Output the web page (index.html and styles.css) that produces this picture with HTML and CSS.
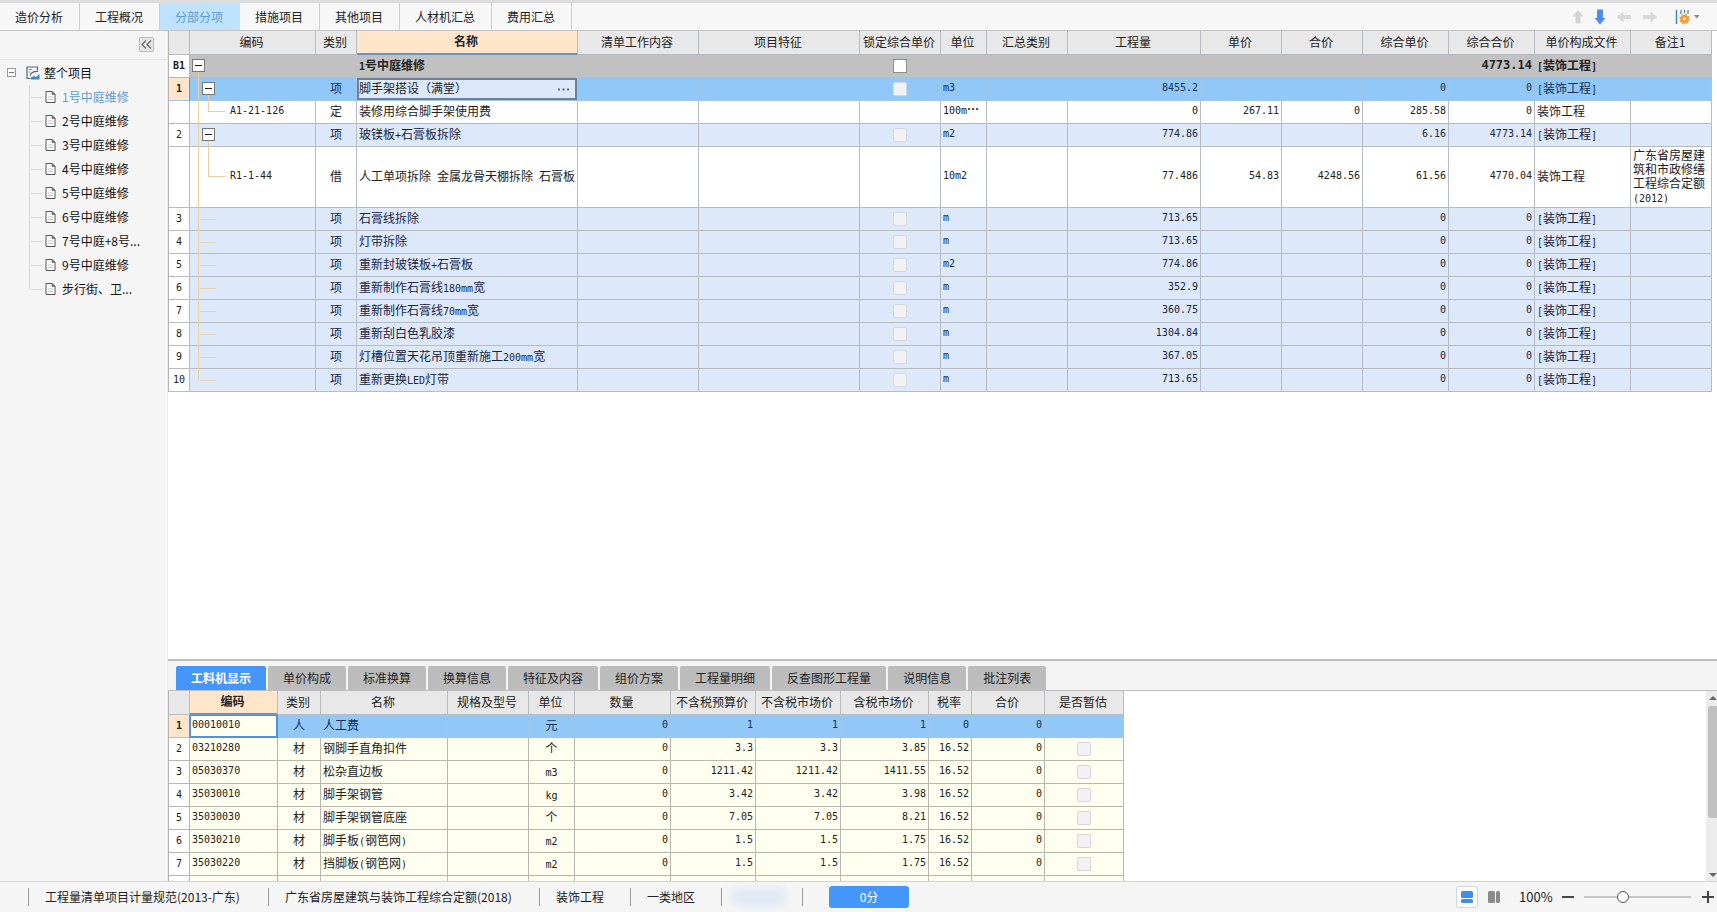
FILE: index.html
```html
<!DOCTYPE html>
<html lang="zh-CN">
<head>
<meta charset="utf-8">
<title>分部分项</title>
<link rel="stylesheet" href="styles.css">
</head>
<body>
<header class="topbar">
  <nav class="tabs">
    <button class="tab">造价分析</button>
    <button class="tab">工程概况</button>
    <button class="tab tab-active">分部分项</button>
    <button class="tab">措施项目</button>
    <button class="tab">其他项目</button>
    <button class="tab">人材机汇总</button>
    <button class="tab">费用汇总</button>
  </nav>
  <div class="tools">
    <button class="tool" aria-label="上移"><svg width="12" height="16" viewBox="0 0 12 16"><path d="M6 1 11.500 7.500H8.500V14.500H3.500V7.500H.5Z" fill="#d3d3d3"/></svg></button>
    <button class="tool" aria-label="下移"><svg width="12" height="16" viewBox="0 0 12 16"><path d="M6 15.500 11.500 9H9V.5H3V9H.5Z" fill="#4a90e8"/></svg></button>
    <button class="tool" aria-label="左移"><svg width="16" height="12" viewBox="0 0 16 12"><path d="M.5 6 7.500 .5V4H15V8H7.500V11.500Z" fill="#d9d9d9"/></svg></button>
    <button class="tool" aria-label="右移"><svg width="16" height="12" viewBox="0 0 16 12"><path d="M15.500 6 8.500 .5V4H1V8H8.500V11.500Z" fill="#d9d9d9"/></svg></button>
    <button class="tool tool-set" aria-label="列设置"><svg width="26" height="16" viewBox="0 0 26 16"><path d="M1.500 1V15" stroke="#3f8fb5" stroke-width="1.500"/><path d="M6 1V5M9.500 1V4M13 1V5" stroke="#4f86b8" stroke-width="1.300"/><circle cx="9.500" cy="10" r="2.800" fill="none" stroke="#f0a030" stroke-width="3"/><circle cx="9.500" cy="10" r="4.500" fill="none" stroke="#f0a030" stroke-width="1.400" stroke-dasharray="2 1.500"/><path d="M19 6H24.500L21.750 9.500Z" fill="#888"/></svg></button>
  </div>
</header>
<div class="body">
  <aside class="side">
    <div class="side-head"><button class="fold" aria-label="收起"><svg width="11" height="9" viewBox="0 0 11 9"><path d="M5 .5 1 4.500 5 8.500M10 .5 6 4.500 10 8.500" fill="none" stroke="#666" stroke-width="1.200"/></svg></button></div>
    <div class="root"><button class="exp" aria-label="折叠"></button><svg width="14" height="14" viewBox="0 0 14 14"><path d="M11.500 4.500V1H1V12.500H4.500" fill="none" stroke="#55677c" stroke-width="1.200"/><path d="M3 3.500H6M3 6H4.500" stroke="#8593a5"/><path d="M4 9.500Q6 5 12 5.500" fill="none" stroke="#55677c" stroke-width="1.200"/><path d="M5 13.500V11.500L8 10 10 11 13.500 8V13.500Z" fill="#3f86d0"/></svg><span>整个项目</span></div>
    <ul class="tree">
      <li><a class="on" href="#1"><svg class="doc" viewBox="0 0 11 13"><use href="#doc"/></svg>1号中庭维修</a></li>
      <li><a href="#2"><svg class="doc" viewBox="0 0 11 13"><use href="#doc"/></svg>2号中庭维修</a></li>
      <li><a href="#3"><svg class="doc" viewBox="0 0 11 13"><use href="#doc"/></svg>3号中庭维修</a></li>
      <li><a href="#4"><svg class="doc" viewBox="0 0 11 13"><use href="#doc"/></svg>4号中庭维修</a></li>
      <li><a href="#5"><svg class="doc" viewBox="0 0 11 13"><use href="#doc"/></svg>5号中庭维修</a></li>
      <li><a href="#6"><svg class="doc" viewBox="0 0 11 13"><use href="#doc"/></svg>6号中庭维修</a></li>
      <li><a href="#7"><svg class="doc" viewBox="0 0 11 13"><use href="#doc"/></svg>7号中庭+8号<i>...</i></a></li>
      <li><a href="#9"><svg class="doc" viewBox="0 0 11 13"><use href="#doc"/></svg>9号中庭维修</a></li>
      <li><a href="#10"><svg class="doc" viewBox="0 0 11 13"><use href="#doc"/></svg>步行街、卫<i>...</i></a></li>
    </ul>
    <svg class="defs" width="0" height="0"><defs><g id="doc"><path d="M1 .5H7L10 3.500V11.500H1Z" fill="#fff" stroke="#555"/><path d="M7 .5V3.500H10Z" fill="#777" stroke="#555" stroke-width=".6"/><path d="M3 6H8M3 8.500H8" stroke="#c4c4c4"/></g></defs></svg>
  </aside>
  <main class="main">
    <section class="upper">
      <table class="grid bill">
        <colgroup><col class="w21"><col class="w126"><col class="w41"><col class="w221"><col class="w121"><col class="w161"><col class="w81"><col class="w46"><col class="w81"><col class="w133"><col class="w81"><col class="w81"><col class="w86"><col class="w86"><col class="w96"><col class="w81"></colgroup>
        <thead><tr><th></th><th>编码</th><th>类别</th><th class="hot">名称</th><th>清单工作内容</th><th>项目特征</th><th>锁定综合单价</th><th>单位</th><th>汇总类别</th><th>工程量</th><th>单价</th><th>合价</th><th>综合单价</th><th>综合合价</th><th>单价构成文件</th><th>备注1</th></tr></thead>
        <tbody>
          <tr class="group"><td class="no">B1</td><td class="code start"><button class="minus m0" aria-label="折叠"></button></td><td></td><td><b>1</b>号中庭维修</td><td></td><td></td><td class="c"><input type="checkbox" aria-label="锁定"></td><td></td><td></td><td></td><td></td><td></td><td></td><td class="n">4773.14</td><td><b>[</b>装饰工程<b>]</b></td><td></td></tr>
          <tr class="sel"><td class="no">1</td><td class="code open"><button class="minus m1" aria-label="折叠"></button></td><td class="c">项</td><td class="edit"><div class="editor"><input type="text" aria-label="名称" value="脚手架搭设（满堂）"><button aria-label="更多"><svg width="11" height="3" viewBox="0 0 11 3"><path d="M0 .5H2V2.500H0ZM4.500 .5H6.500V2.500H4.500ZM9 .5H11V2.500H9Z" fill="#667"/></svg></button></div></td><td></td><td></td><td class="c"><input type="checkbox" disabled aria-label="锁定"></td><td class="u">m3</td><td></td><td class="n">8455.2</td><td></td><td></td><td class="n">0</td><td class="n">0</td><td><b>[</b>装饰工程<b>]</b></td><td></td></tr>
          <tr><td class="no"></td><td class="code kid">A1-21-126</td><td class="c">定</td><td>装修用综合脚手架使用费</td><td></td><td></td><td></td><td class="u">100m<i>…</i></td><td></td><td class="n">0</td><td class="n">267.11</td><td class="n">0</td><td class="n">285.58</td><td class="n">0</td><td>装饰工程</td><td></td></tr>
          <tr class="item"><td class="no">2</td><td class="code open"><button class="minus m1" aria-label="折叠"></button></td><td class="c">项</td><td>玻镁板<b>+</b>石膏板拆除</td><td></td><td></td><td class="c"><input type="checkbox" disabled aria-label="锁定"></td><td class="u">m2</td><td></td><td class="n">774.86</td><td></td><td></td><td class="n">6.16</td><td class="n">4773.14</td><td><b>[</b>装饰工程<b>]</b></td><td></td></tr>
          <tr class="tall"><td class="no"></td><td class="code kid">R1-1-44</td><td class="c">借</td><td>人工单项拆除<b> </b>金属龙骨天棚拆除<b> </b>石膏板</td><td></td><td></td><td></td><td class="u">10m2</td><td></td><td class="n">77.486</td><td class="n">54.83</td><td class="n">4248.56</td><td class="n">61.56</td><td class="n">4770.04</td><td>装饰工程</td><td class="note">广东省房屋建筑和市政修缮工程综合定额<b>(2012)</b></td></tr>
          <tr class="item"><td class="no">3</td><td class="code leaf"></td><td class="c">项</td><td>石膏线拆除</td><td></td><td></td><td class="c"><input type="checkbox" disabled aria-label="锁定"></td><td class="u">m</td><td></td><td class="n">713.65</td><td></td><td></td><td class="n">0</td><td class="n">0</td><td><b>[</b>装饰工程<b>]</b></td><td></td></tr>
          <tr class="item"><td class="no">4</td><td class="code leaf"></td><td class="c">项</td><td>灯带拆除</td><td></td><td></td><td class="c"><input type="checkbox" disabled aria-label="锁定"></td><td class="u">m</td><td></td><td class="n">713.65</td><td></td><td></td><td class="n">0</td><td class="n">0</td><td><b>[</b>装饰工程<b>]</b></td><td></td></tr>
          <tr class="item"><td class="no">5</td><td class="code leaf"></td><td class="c">项</td><td>重新封玻镁板<b>+</b>石膏板</td><td></td><td></td><td class="c"><input type="checkbox" disabled aria-label="锁定"></td><td class="u">m2</td><td></td><td class="n">774.86</td><td></td><td></td><td class="n">0</td><td class="n">0</td><td><b>[</b>装饰工程<b>]</b></td><td></td></tr>
          <tr class="item"><td class="no">6</td><td class="code leaf"></td><td class="c">项</td><td>重新制作石膏线<b>180mm</b>宽</td><td></td><td></td><td class="c"><input type="checkbox" disabled aria-label="锁定"></td><td class="u">m</td><td></td><td class="n">352.9</td><td></td><td></td><td class="n">0</td><td class="n">0</td><td><b>[</b>装饰工程<b>]</b></td><td></td></tr>
          <tr class="item"><td class="no">7</td><td class="code leaf"></td><td class="c">项</td><td>重新制作石膏线<b>70mm</b>宽</td><td></td><td></td><td class="c"><input type="checkbox" disabled aria-label="锁定"></td><td class="u">m</td><td></td><td class="n">360.75</td><td></td><td></td><td class="n">0</td><td class="n">0</td><td><b>[</b>装饰工程<b>]</b></td><td></td></tr>
          <tr class="item"><td class="no">8</td><td class="code leaf"></td><td class="c">项</td><td>重新刮白色乳胶漆</td><td></td><td></td><td class="c"><input type="checkbox" disabled aria-label="锁定"></td><td class="u">m</td><td></td><td class="n">1304.84</td><td></td><td></td><td class="n">0</td><td class="n">0</td><td><b>[</b>装饰工程<b>]</b></td><td></td></tr>
          <tr class="item"><td class="no">9</td><td class="code leaf"></td><td class="c">项</td><td>灯槽位置天花吊顶重新施工<b>200mm</b>宽</td><td></td><td></td><td class="c"><input type="checkbox" disabled aria-label="锁定"></td><td class="u">m</td><td></td><td class="n">367.05</td><td></td><td></td><td class="n">0</td><td class="n">0</td><td><b>[</b>装饰工程<b>]</b></td><td></td></tr>
          <tr class="item"><td class="no">10</td><td class="code leaf end"></td><td class="c">项</td><td>重新更换<b>LED</b>灯带</td><td></td><td></td><td class="c"><input type="checkbox" disabled aria-label="锁定"></td><td class="u">m</td><td></td><td class="n">713.65</td><td></td><td></td><td class="n">0</td><td class="n">0</td><td><b>[</b>装饰工程<b>]</b></td><td></td></tr>
        </tbody>
      </table>
    </section>
    <section class="lower">
      <nav class="subtabs">
        <button class="sub sub-active">工料机显示</button>
        <button class="sub">单价构成</button>
        <button class="sub">标准换算</button>
        <button class="sub">换算信息</button>
        <button class="sub">特征及内容</button>
        <button class="sub">组价方案</button>
        <button class="sub">工程量明细</button>
        <button class="sub">反查图形工程量</button>
        <button class="sub">说明信息</button>
        <button class="sub">批注列表</button>
      </nav>
      <div class="pane">
        <div class="pane-view">
        <table class="grid res">
          <colgroup><col class="w21"><col class="w88"><col class="w43"><col class="w127"><col class="w81"><col class="w46"><col class="w96"><col class="w85"><col class="w85"><col class="w88"><col class="w43"><col class="w73"><col class="w79"></colgroup>
          <thead><tr><th></th><th class="hot">编码</th><th>类别</th><th>名称</th><th>规格及型号</th><th>单位</th><th>数量</th><th>不含税预算价</th><th>不含税市场价</th><th>含税市场价</th><th>税率</th><th>合价</th><th>是否暂估</th></tr></thead>
          <tbody>
            <tr class="sel"><td class="no">1</td><td class="u focus">00010010</td><td class="c">人</td><td>人工费</td><td></td><td class="c">元</td><td class="n">0</td><td class="n">1</td><td class="n">1</td><td class="n">1</td><td class="n">0</td><td class="n">0</td><td></td></tr>
            <tr><td class="no">2</td><td class="u">03210280</td><td class="c">材</td><td>钢脚手直角扣件</td><td></td><td class="c">个</td><td class="n">0</td><td class="n">3.3</td><td class="n">3.3</td><td class="n">3.85</td><td class="n">16.52</td><td class="n">0</td><td class="c"><input type="checkbox" disabled aria-label="暂估"></td></tr>
            <tr><td class="no">3</td><td class="u">05030370</td><td class="c">材</td><td>松杂直边板</td><td></td><td class="c"><b>m3</b></td><td class="n">0</td><td class="n">1211.42</td><td class="n">1211.42</td><td class="n">1411.55</td><td class="n">16.52</td><td class="n">0</td><td class="c"><input type="checkbox" disabled aria-label="暂估"></td></tr>
            <tr><td class="no">4</td><td class="u">35030010</td><td class="c">材</td><td>脚手架钢管</td><td></td><td class="c"><b>kg</b></td><td class="n">0</td><td class="n">3.42</td><td class="n">3.42</td><td class="n">3.98</td><td class="n">16.52</td><td class="n">0</td><td class="c"><input type="checkbox" disabled aria-label="暂估"></td></tr>
            <tr><td class="no">5</td><td class="u">35030030</td><td class="c">材</td><td>脚手架钢管底座</td><td></td><td class="c">个</td><td class="n">0</td><td class="n">7.05</td><td class="n">7.05</td><td class="n">8.21</td><td class="n">16.52</td><td class="n">0</td><td class="c"><input type="checkbox" disabled aria-label="暂估"></td></tr>
            <tr><td class="no">6</td><td class="u">35030210</td><td class="c">材</td><td>脚手板<b>(</b>钢笆网<b>)</b></td><td></td><td class="c"><b>m2</b></td><td class="n">0</td><td class="n">1.5</td><td class="n">1.5</td><td class="n">1.75</td><td class="n">16.52</td><td class="n">0</td><td class="c"><input type="checkbox" disabled aria-label="暂估"></td></tr>
            <tr><td class="no">7</td><td class="u">35030220</td><td class="c">材</td><td>挡脚板<b>(</b>钢笆网<b>)</b></td><td></td><td class="c"><b>m2</b></td><td class="n">0</td><td class="n">1.5</td><td class="n">1.5</td><td class="n">1.75</td><td class="n">16.52</td><td class="n">0</td><td class="c"><input type="checkbox" disabled aria-label="暂估"></td></tr>
            <tr><td class="no"></td><td></td><td></td><td></td><td></td><td></td><td></td><td></td><td></td><td></td><td></td><td></td><td></td></tr>
          </tbody>
        </table>
        </div>
        <div class="scroll"><span class="up"></span><span class="thumb"></span><span class="down"></span></div>
      </div>
    </section>
  </main>
</div>
<footer class="status">
  <span class="cell spec">工程量清单项目计量规范(2013-广东)</span>
  <span class="cell quota">广东省房屋建筑与装饰工程综合定额(2018)</span>
  <span class="cell kind">装饰工程</span>
  <span class="cell zone">一类地区</span>
  <span class="cell veil"><span class="smudge"></span></span>
  <span class="cell last"><button class="score">0分</button></span>
  <div class="zoom">
    <button class="view view-on" aria-label="上下布局"><svg width="12" height="12" viewBox="0 0 12 12"><rect width="12" height="7" rx="1.500" fill="#3f8fe8"/><rect y="8" width="12" height="4" rx="1.500" fill="#3f8fe8"/></svg></button>
    <button class="view" aria-label="左右布局"><svg width="12" height="12" viewBox="0 0 12 12"><rect width="7" height="12" rx="1.500" fill="#8a8a8a"/><rect x="8" width="4" height="12" rx="1.500" fill="#8a8a8a"/></svg></button>
    <label class="pct" for="zoom">100%</label>
    <button class="step" aria-label="缩小"><svg width="12" height="12" viewBox="0 0 12 12"><path d="M0 6H12" stroke="#444" stroke-width="2"/></svg></button>
    <input class="range" id="zoom" type="range" min="0" max="100" value="35">
    <button class="step" aria-label="放大"><svg width="12" height="12" viewBox="0 0 12 12"><path d="M0 6H12M6 0V12" stroke="#444" stroke-width="2"/></svg></button>
  </div>
</footer>
</body>
</html>
```
FILE: styles.css
```css
* { box-sizing: border-box; }
html, body { height: 100%; }
body {
  margin: 0;
  display: flex;
  flex-direction: column;
  overflow: hidden;
  background: #fff;
  color: #222;
  font: 12px/16px "Noto Sans CJK SC", sans-serif;
}
button, input { margin: 0; padding: 0; border: 0; background: none; font: inherit; color: inherit; }
svg { display: block; }

/* top bar */
.topbar {
  display: flex;
  justify-content: space-between;
  height: 31px;
  flex: none;
  border-top: 3px solid #dcdcdc;
  border-bottom: 1px solid #c4c4c4;
  background: #f7f7f7;
}
.tabs { display: flex; }
.tab { padding: 0 16px 0 15px; border-right: 1px solid #cfcfcf; }
.tab-active { background: #bfe2ff; color: #5b9bd5; border-right-color: #bfe2ff; }
.tools { display: flex; align-items: center; gap: 10px; padding-right: 16px; }
.tool-set { margin-left: 7px; }

.body { flex: 1; display: flex; min-height: 0; }

/* project tree */
.side { width: 168px; flex: none; background: #f5f5f5; border-right: 1px solid #ececec; }
.side-head { display: flex; justify-content: flex-end; align-items: center; height: 29px; padding: 0 13px 1px 0; border-bottom: 1px solid #e2e2e2; }
.fold { display: grid; place-items: center; width: 15px; height: 15px; border: 1px solid #bbb; border-radius: 2px; background: #e6e6e6; }
.root { display: flex; align-items: center; height: 25px; padding-left: 7px; color: #111; }
.root span { padding-left: 4px; }
.exp { width: 9px; height: 9px; margin-right: 10px; border: 1px solid #999; background: linear-gradient(#777, #777) center / 5px 1px no-repeat #fff; }
.tree { list-style: none; margin: 0 0 0 29px; padding: 0; }
.tree li { height: 24px; background: linear-gradient(#ecd9b0, #ecd9b0) 2px 12px / 11px 1px no-repeat, linear-gradient(#ecd9a0, #ecd9a0) 0 0 / 1px 100% no-repeat; }
.tree li:last-child { background-size: 11px 1px, 1px 12px; }
.tree a { display: flex; align-items: center; height: 24px; padding-left: 16px; color: #111; text-decoration: none; white-space: nowrap; }
.tree .on { color: #5b9bd5; }
.tree i { font-style: normal; }
.doc { width: 11px; height: 13px; margin-right: 6px; }
.defs { display: none; }

.main { flex: 1; min-width: 0; display: flex; flex-direction: column; }
.upper { flex: 1; min-height: 0; overflow: hidden; padding-right: 5px; }

/* grids */
.grid { table-layout: fixed; border-collapse: separate; border-spacing: 0; border-left: 1px solid #b4b4b4; }
.bill { width: 100%; }
.res { width: 956px; }
.w21 { width: 21px; } .w41 { width: 41px; } .w43 { width: 43px; } .w46 { width: 46px; }
.w73 { width: 73px; } .w79 { width: 79px; } .w81 { width: 81px; } .w85 { width: 85px; }
.w86 { width: 86px; } .w88 { width: 88px; } .w96 { width: 96px; } .w121 { width: 121px; }
.w126 { width: 126px; } .w127 { width: 127px; } .w133 { width: 133px; } .w161 { width: 161px; } .w221 { width: 221px; }
.grid th, .grid td { padding: 0 2px 2px; border: solid #b6bcc2; border-width: 0 1px 1px 0; white-space: nowrap; overflow: hidden; }
.grid th { height: 24px; padding: 0 2px 2px 0; background: #e8e8e8; font-weight: 400; }
.grid .hot { background: #ffe6cb; border-bottom: 2px solid #6495cc; font-weight: 700; }
.grid td { height: 23px; }
.grid b { font: 10px/12px "DejaVu Sans Mono", monospace; font-weight: inherit; white-space: pre; }
.grid .no { padding: 0; background: #fff; text-align: center; font-family: "DejaVu Sans Mono", monospace; font-size: 10px; color: #222; }
.grid .c { text-align: center; padding: 0 0 2px; }
.grid .c:has(input) { padding: 0; }
.grid .n, .grid .u, .grid .code { font-family: "DejaVu Sans Mono", monospace; font-size: 10px; }
.grid .n { text-align: right; }
.u i { font: 12px/12px "Noto Sans CJK SC", sans-serif; font-weight: 700; }
.grid input[type=checkbox] { appearance: none; display: block; width: 14px; height: 14px; margin: 0 auto; border: 1px solid #8c8c8c; background: #fff; }
.grid input[type=checkbox]:disabled { border-color: #d6d6de; border-radius: 2px; background: #f2f2f4; }
.group td { background: #c1c1c1; border-color: #c1c1c1; border-bottom-color: #c8b8b0; font-weight: 700; }
.grid .group .no { font-weight: 700; border-color: #b6b6b6; }
.grid .group .n { font-size: 12px; }
.item td { background: #dde9fb; color: #1a2440; }
.grid .sel td { background: #91c8f7; border-color: #9fc6e8; color: #10305c; }
.grid .sel .no { background: #ffe6cb; border-right-color: #6495cc; color: #222; font-weight: 700; }
.tall td { height: 61px; }
.grid .note { white-space: normal; line-height: 14px; word-break: break-all; }
.res tbody td { background: #ffffef; border-color: #b8b8ae; }
.res tbody .no { background: #fff; }
.grid .sel .focus { background: #ffffef; color: #222; box-shadow: inset 0 0 0 1px #5090e0; border-color: #5090e0; }

.grid .edit { padding: 0; }
.editor { display: flex; height: 22px; border: 2px solid #6f7f95; background: #dde9fb; }
.editor input { flex: 1; min-width: 0; padding-bottom: 2px; color: #222; }
.editor button { display: grid; place-items: center; width: 24px; }

/* outline connectors in the code column */
.grid .code { position: relative; padding-left: 40px; overflow: visible; }
.code::before { content: ""; position: absolute; left: 8px; top: 0; bottom: -1px; width: 1px; background: #e8cf9c; }
.start::before { top: 17px; }
.end::before { bottom: 11px; }
.leaf::after { content: ""; position: absolute; left: 10px; top: 11px; width: 16px; height: 1px; background: #e4d2b0; }
.open::after { content: ""; position: absolute; left: 18px; top: 17px; bottom: -1px; width: 1px; background: #e8cf9c; }
.kid::after { content: ""; position: absolute; left: 18px; top: 0; bottom: 50%; width: 16px; border: solid #e8cf9c; border-width: 0 0 1px 1px; }
.minus { position: absolute; top: 4px; width: 13px; height: 13px; z-index: 1; border: 1px solid #777; background: linear-gradient(#222, #222) center / 7px 1px no-repeat #fff; }
.m0 { left: 2px; }
.m1 { left: 12px; }

/* lower pane */
.lower { flex: none; height: 222px; display: flex; flex-direction: column; border-top: 2px solid #bdbdbd; background: #f4f4f4; }
.subtabs { display: flex; flex: none; gap: 2px; height: 30px; padding: 5px 8px 0; border-bottom: 1px solid #bdbdbd; }
.sub { padding: 0 15px; border-radius: 2px 2px 0 0; background: #bcbcbc; }
.sub-active { background: #4496f8; color: #fff; font-weight: 700; }
.pane { flex: 1; min-height: 0; display: flex; background: #fff; }
.pane-view { flex: 1; min-width: 0; overflow: hidden; }
.scroll { display: flex; flex-direction: column; align-items: center; width: 11px; flex: none; padding: 5px 0 4px 2px; background: #ececec; }
.up, .down { border: 4px solid transparent; }
.up { border-top: 0; border-bottom-color: #666; }
.down { border-bottom: 0; border-top-color: #666; margin-top: auto; }
.thumb { width: 9px; height: 112px; margin-top: 6px; border-radius: 3px 0 0 3px; background: #c0c0c0; }

/* status bar */
.status { flex: none; display: flex; align-items: center; height: 31px; padding-left: 28px; border-top: 1px solid #d4d4d4; background: #f5f5f5; white-space: nowrap; }
.cell { height: 18px; padding: 0 27px 0 16px; border-left: 1px solid #999; line-height: 18px; }
.spec { width: 240px; }
.quota { width: 271px; }
.kind, .zone { width: 91px; }
.veil { width: 81px; padding: 0 16px 0 10px; }
.smudge { display: block; height: 18px; background: #dfe9f4; filter: blur(4px); }
.last { display: flex; align-items: center; padding: 0 0 0 26px; }
.score { width: 80px; height: 22px; border-radius: 3px; background: #4496f8; color: #fff; }
.zoom { display: flex; align-items: center; margin-left: auto; padding-right: 3px; }
.view { display: grid; place-items: center; width: 22px; height: 22px; margin-right: 5px; border: 1px solid transparent; border-radius: 3px; }
.view-on { border-color: #cfd6dc; background: #fff; }
.pct { width: 32px; margin: 0 11px 0 9px; font-size: 13px; }
.range { appearance: none; width: 107px; height: 14px; margin: 0 11px 0 10px; background: linear-gradient(#c6c6c6, #c6c6c6) center / 100% 2px no-repeat; }
.range::-webkit-slider-thumb { appearance: none; width: 12px; height: 12px; border: 1px solid #555; border-radius: 50%; background: #fff; }
```
